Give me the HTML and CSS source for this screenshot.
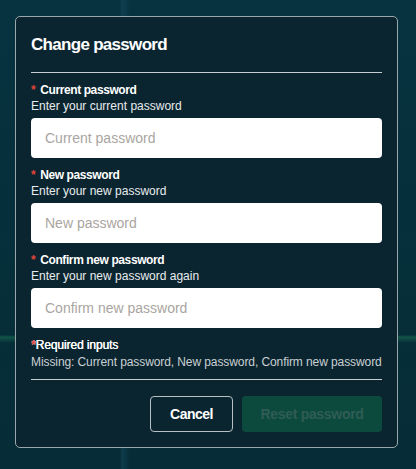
FILE: index.html
```html
<!DOCTYPE html>
<html lang="en">
<head>
    <meta charset="UTF-8">
    <meta name="viewport" content="width=device-width, initial-scale=1.0">
    <title>Change password</title>
    <link rel="stylesheet" href="styles.css">
</head>
<body>
    <div class="backdrop"></div>

    <div class="dialog">
        <h2>Change password</h2>
        <hr>

        <form id="passwordForm">
            <div class="field">
                <label for="current"><span class="req">*</span> Current password</label>
                <p class="hint">Enter your current password</p>
                <input type="password" id="current" placeholder="Current password">
            </div>
            <div class="field">
                <label for="newpass"><span class="req">*</span> New password</label>
                <p class="hint">Enter your new password</p>
                <input type="password" id="newpass" placeholder="New password">
            </div>
            <div class="field">
                <label for="confirm"><span class="req">*</span> Confirm new password</label>
                <p class="hint">Enter your new password again</p>
                <input type="password" id="confirm" placeholder="Confirm new password">
            </div>

            <div class="required">
                <p class="required-title"><span class="req">*</span>Required inputs</p>
                <p class="missing">Missing: Current password, New password, Confirm new password</p>
            </div>
            <hr>

            <div class="actions">
                <button type="button" class="btn-cancel">Cancel</button>
                <button type="submit" class="btn-reset" disabled>Reset password</button>
            </div>
        </form>
    </div>
</body>
</html>
```

FILE: styles.css
```css
body {
    font-family: 'Liberation Sans', Arial, sans-serif;
    margin: 0;
    height: 100vh;
    background: #062a36;
    position: relative;
    overflow: hidden;
}

.backdrop {
    position: absolute;
    top: 0;
    left: 0;
    width: 100%;
    height: 100%;
    background:
        linear-gradient(180deg, transparent 0, transparent 335px, rgba(40, 160, 100, 0.35) 337px, transparent 343px),
        linear-gradient(90deg, transparent 0, transparent 120px, rgba(30, 90, 110, 0.35) 122px, transparent 130px),
        linear-gradient(180deg, #073240 0%, #05303b 40%, #062c37 100%);
    z-index: -1;
}

.dialog {
    width: 351px;
    margin: 16px 0 0 15px;
    padding: 17px 15px 15px;
    background-color: #0b2530;
    border: 1px solid #9aa8ad;
    border-radius: 5px;
    color: #fff;
}

.dialog h2 {
    margin: 0;
    font-size: 17px;
    font-weight: bold;
    line-height: 22px;
    letter-spacing: -0.7px;
}

.dialog hr {
    border: none;
    border-top: 1px solid #c6ced1;
    margin: 16px 0 9px;
}

.field {
    margin-bottom: 9px;
}

.field label {
    display: block;
    font-size: 12px;
    font-weight: bold;
    line-height: 16px;
    letter-spacing: -0.4px;
}

.req {
    color: #e0443a;
    font-weight: bold;
    margin-right: 2px;
}

.hint {
    margin: 0 0 4px;
    font-size: 12px;
    line-height: 16px;
    color: #e8ecee;
}

.field input {
    display: block;
    box-sizing: border-box;
    width: 100%;
    height: 40px;
    padding: 0 14px;
    border: none;
    border-radius: 4px;
    background-color: #fff;
    font-family: inherit;
    font-size: 14px;
}

.field input::placeholder {
    color: #aaa59f;
}

.required p {
    margin: 0;
    font-size: 12px;
    line-height: 17px;
}

.required-title {
    letter-spacing: -0.1px;
    text-shadow: 0.3px 0 0 #fff;
}

.required-title .req {
    margin-right: 0;
}

.missing {
    color: #c9d0d3;
    white-space: nowrap;
    letter-spacing: -0.09px;
}

.required + hr {
    margin: 8px 0 16px;
}

.actions {
    display: flex;
    justify-content: flex-end;
    gap: 9px;
}

.actions button {
    height: 36px;
    border-radius: 4px;
    font-family: inherit;
    font-size: 14px;
    font-weight: bold;
}

.btn-cancel {
    width: 83px;
    background: transparent;
    border: 1px solid #b7c1c4;
    color: #fff;
    letter-spacing: -0.5px;
    cursor: pointer;
}

.btn-reset {
    width: 140px;
    background-color: #0c4a3d;
    border: none;
    color: #2f5d55;
    letter-spacing: -0.3px;
}
```
